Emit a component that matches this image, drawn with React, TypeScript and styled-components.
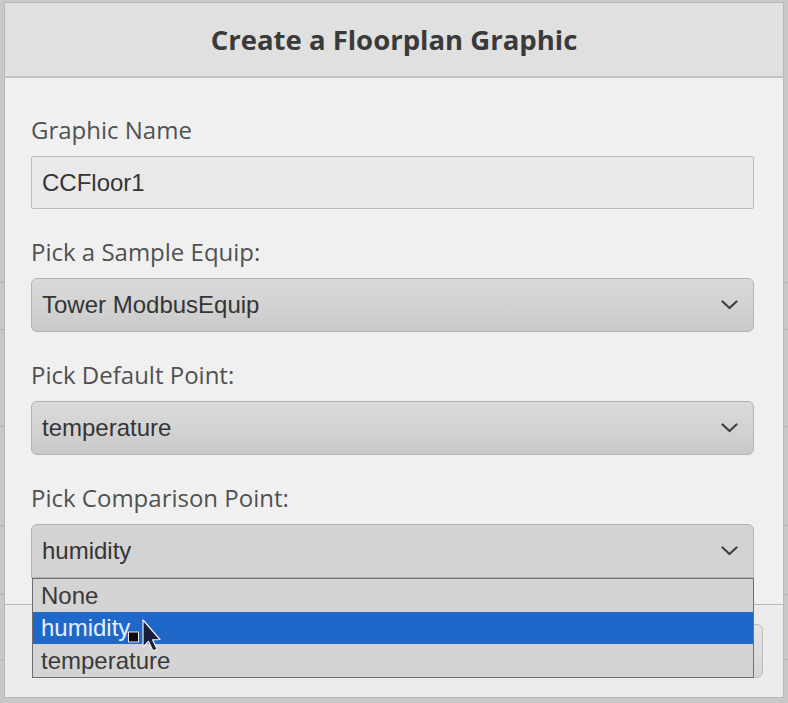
import React from "react";
import styled, { createGlobalStyle } from "styled-components";

const Global = createGlobalStyle`
  html, body { margin: 0; padding: 0; }
  body {
    background: #c8c8c8;
    width: 788px;
    height: 703px;
    overflow: hidden;
    font-family: "Open Sans", "Liberation Sans", sans-serif;
  }
`;

const Stage = styled.div`
  position: relative;
  width: 788px;
  height: 703px;
  overflow: hidden;
`;

const Backdrop = styled.div`
  display: flex;
  flex-direction: column;
`;

const BackdropRow = styled.div<{ $h: number }>`
  height: ${(p) => p.$h}px;
  border-bottom: 1px solid #b4b4b4;
  box-sizing: border-box;
`;

const Modal = styled.div`
  position: absolute;
  top: 2px;
  left: 4px;
  width: 780px;
  height: 696px;
  box-sizing: border-box;
  border: 1px solid #b9b9b9;
  background: #f0f0f0;
  display: flex;
  flex-direction: column;
`;

const Header = styled.div`
  height: 73px;
  border-bottom: 2px solid #c4c4c4;
  background: #e0e0e0;
  display: flex;
  align-items: center;
  justify-content: center;
`;

const Title = styled.h1`
  margin: 0;
  font-family: "Open Sans", sans-serif;
  font-weight: 700;
  font-size: 27.5px;
  color: #3a3a3a;
`;

const Body = styled.div`
  padding: 35px 29px 26px 26px;
  display: flex;
  flex-direction: column;
  gap: 26px;
`;

const Field = styled.div`
  position: relative;
  display: flex;
  flex-direction: column;
`;

const Label = styled.label`
  font-family: "Open Sans", sans-serif;
  font-size: 24px;
  line-height: 34px;
  height: 34px;
  margin-bottom: 9px;
  color: #515151;
`;

const TextInput = styled.div`
  height: 53px;
  box-sizing: border-box;
  border: 1px solid #bcbcbc;
  border-radius: 2px;
  background: #e9e9e9;
  padding-left: 10px;
  display: flex;
  align-items: center;
  font-family: "Liberation Sans", Arial, sans-serif;
  font-size: 24px;
  color: #353535;
`;

const Select = styled.div<{ $open?: boolean }>`
  height: 54px;
  box-sizing: border-box;
  border: 1px solid #b3b3b3;
  border-radius: 6px;
  ${(p) => (p.$open ? "border-bottom-left-radius: 0; border-bottom-right-radius: 0;" : "")}
  background: ${(p) =>
    p.$open ? "#d3d3d3" : "linear-gradient(to bottom, #dadada 0%, #d2d2d2 55%, #c9c9c9 100%)"};
  padding: 0 15px 0 10px;
  display: flex;
  align-items: center;
  justify-content: space-between;
  font-family: "Liberation Sans", Arial, sans-serif;
  font-size: 24px;
  color: #353535;
`;

const Chevron = () => (
  <svg width="17" height="10" viewBox="0 0 17 10">
    <polyline points="1.5,1.5 8.5,8 15.5,1.5" fill="none" stroke="#3f3f3f" strokeWidth="2.2" strokeLinecap="round" strokeLinejoin="round" />
  </svg>
);

const OptionList = styled.div`
  position: absolute;
  top: 100%;
  left: 1px;
  right: 0;
  z-index: 5;
  border: 1px solid #6f6f6f;
  background: #d4d4d4;
  display: flex;
  flex-direction: column;
`;

const Option = styled.div<{ $selected?: boolean; $h: number }>`
  height: ${(p) => p.$h}px;
  line-height: ${(p) => p.$h}px;
  padding-left: 8px;
  font-family: "Liberation Sans", Arial, sans-serif;
  font-size: 24px;
  color: ${(p) => (p.$selected ? "#e6efff" : "#3a3a3a")};
  background: ${(p) => (p.$selected ? "#1f67c9" : "transparent")};
`;

const Footer = styled.div`
  flex: 1;
  border-top: 1px solid #b9b9b9;
  background: #ececec;
  display: flex;
  justify-content: flex-end;
  align-items: flex-start;
  padding: 19px 20px 0 0;
`;

const FooterButton = styled.button`
  width: 120px;
  height: 54px;
  border: 1px solid #bdbdbd;
  border-radius: 6px;
  background: linear-gradient(to bottom, #e4e4e4, #d6d6d6);
  font-family: "Open Sans", sans-serif;
  font-size: 22px;
  color: #444;
`;

const Cursor = styled.div`
  position: absolute;
  left: 127px;
  top: 619px;
  z-index: 10;
  pointer-events: none;
`;

const CursorIcon = () => (
  <svg width="42" height="40" viewBox="0 0 42 40">
    <rect x="1.5" y="13" width="10" height="10" fill="#0c0c0c" stroke="#e8e8e8" strokeWidth="1" />
    <path d="M16 1 L16 28 L21.5 22.5 L26 32 L30 30 L25.5 20.8 L33 20.5 Z" fill="#1c1c3c" stroke="#f2f2f2" strokeWidth="1.2" strokeLinejoin="round" />
  </svg>
);

export default function App() {
  return (
    <>
      <Global />
      <Stage>
        <Backdrop>
          <BackdropRow $h={283} />
          <BackdropRow $h={47} />
          <BackdropRow $h={97} />
          <BackdropRow $h={99} />
          <BackdropRow $h={69} />
          <BackdropRow $h={65} />
        </Backdrop>
        <Modal>
          <Header>
            <Title>Create a Floorplan Graphic</Title>
          </Header>
          <Body>
            <Field>
              <Label>Graphic Name</Label>
              <TextInput>CCFloor1</TextInput>
            </Field>
            <Field>
              <Label>Pick a Sample Equip:</Label>
              <Select>
                <span>Tower ModbusEquip</span>
                <Chevron />
              </Select>
            </Field>
            <Field>
              <Label>Pick Default Point:</Label>
              <Select>
                <span>temperature</span>
                <Chevron />
              </Select>
            </Field>
            <Field>
              <Label>Pick Comparison Point:</Label>
              <Select $open>
                <span>humidity</span>
                <Chevron />
              </Select>
              <OptionList>
                <Option $h={33}>None</Option>
                <Option $h={32} $selected>humidity</Option>
                <Option $h={33}>temperature</Option>
              </OptionList>
            </Field>
          </Body>
          <Footer>
            <FooterButton>Create</FooterButton>
          </Footer>
        </Modal>
        <Cursor>
          <CursorIcon />
        </Cursor>
      </Stage>
    </>
  );
}
